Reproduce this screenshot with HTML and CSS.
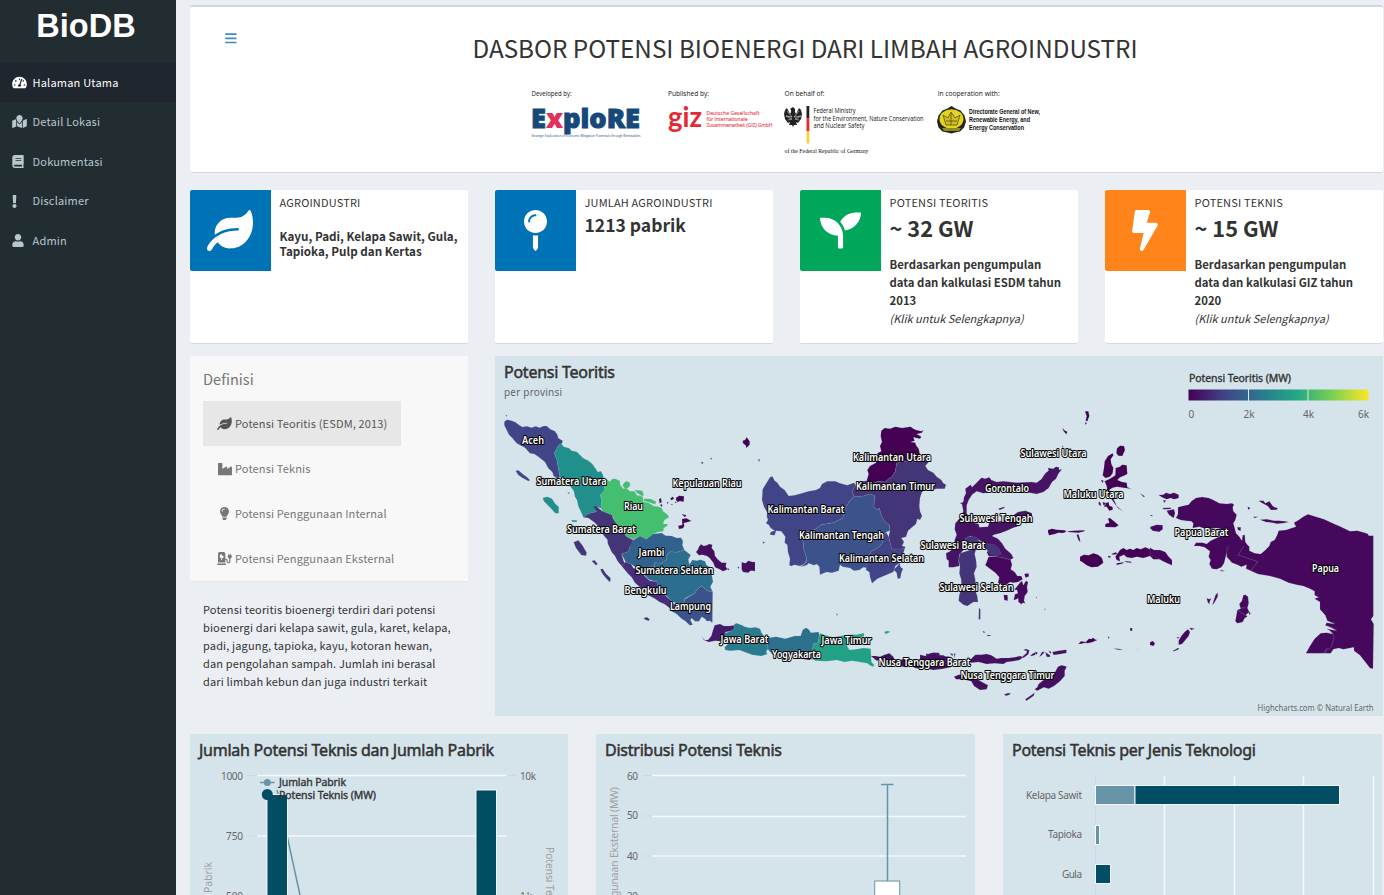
FILE: index.html
```html
<!DOCTYPE html>
<html lang="id">
<head>
<meta charset="utf-8">
<title>BioDB</title>
<link rel="stylesheet" href="styles.css">
</head>
<body>
<svg width="0" height="0" class="defs"><defs>
<symbol id="leaf" viewBox="0 0 576 512"><path d="M546.2 9.7c-5.6-12.5-21.6-13-28.3-1.2C486.9 62.4 431.4 96 368 96h-80C182 96 96 182 96 288c0 7 .8 13.7 1.5 20.5C161.3 262.8 253.4 224 384 224c8.8 0 16 7.2 16 16s-7.2 16-16 16C132.6 256 26 410.1 2.4 468c-6.6 16.3 1.2 34.9 17.5 41.6 16.4 6.8 35-1.1 41.8-17.3 1.5-3.6 20.9-47.9 71.9-90.6 32.4 43.9 94 85.8 174.9 77.2C465.5 467.5 576 326.7 576 154.3c0-50.2-10.8-102.2-29.8-144.6z"/></symbol>
</defs></svg>
<div class="app">
<aside class="sidebar">
  <div class="brand">BioDB</div>
  <nav>
    <a class="nav-item active"><svg class="ico w16" viewBox="0 0 576 512"><path d="M288 32C128.94 32 0 160.94 0 320c0 52.8 14.25 102.26 39.06 144.8 5.61 9.62 16.3 15.2 27.44 15.2h443c11.14 0 21.83-5.58 27.44-15.2C561.75 422.26 576 372.8 576 320c0-159.06-128.94-288-288-288zm0 64c14.71 0 26.58 10.13 30.32 23.65-1.11 2.26-2.64 4.23-3.45 6.67l-9.22 27.67c-5.13 3.49-10.97 6.01-17.64 6.01-17.67 0-32-14.33-32-32S270.33 96 288 96zM96 384c-17.67 0-32-14.33-32-32s14.33-32 32-32 32 14.33 32 32-14.33 32-32 32zm48-160c-17.67 0-32-14.33-32-32s14.33-32 32-32 32 14.33 32 32-14.33 32-32 32zm246.77-72.41l-61.33 184C343.13 347.33 352 364.54 352 384c0 11.72-3.38 22.55-8.88 32H232.88c-5.5-9.45-8.88-20.28-8.88-32 0-33.94 26.5-61.43 59.9-63.59l61.34-184.01c4.17-12.56 17.73-19.45 30.36-15.17 12.57 4.19 19.35 17.79 15.17 30.36zm14.66 57.2l15.52-46.55c3.47-1.29 7.13-2.23 11.05-2.23 17.67 0 32 14.33 32 32s-14.33 32-32 32c-11.38-.01-20.89-6.28-26.57-15.22zM480 384c-17.67 0-32-14.33-32-32s14.33-32 32-32 32 14.33 32 32-14.33 32-32 32z"/></svg><span>Halaman Utama</span></a>
    <a class="nav-item"><svg class="ico w16" viewBox="0 0 576 512"><path d="M288 0c-69.59 0-126 56.41-126 126 0 56.26 82.35 158.8 113.9 196.02 6.39 7.54 17.82 7.54 24.2 0C331.65 284.8 414 182.26 414 126 414 56.41 357.59 0 288 0zM20.12 215.95A32.006 32.006 0 0 0 0 245.66v250.32c0 11.32 11.43 19.06 21.94 14.86L160 448V214.92c-8.84-15.98-16.07-31.54-21.25-46.42L20.12 215.95zM288 359.67c-14.07 0-27.38-6.18-36.51-16.96-19.66-23.2-40.57-49.62-59.49-76.72v182l192 64V266c-18.92 27.09-39.82 53.52-59.49 76.72-9.13 10.77-22.44 16.95-36.51 16.95zm266.06-198.51L416 224v288l139.88-55.95A31.996 31.996 0 0 0 576 426.34V176.02c0-11.32-11.43-19.06-21.94-14.86z"/></svg><span>Detail Lokasi</span></a>
    <a class="nav-item"><svg class="ico w12" viewBox="0 0 448 512"><path d="M448 360V24c0-13.3-10.7-24-24-24H96C43 0 0 43 0 96v320c0 53 43 96 96 96h328c13.3 0 24-10.7 24-24v-16c0-7.5-3.5-14.3-8.9-18.7-4.2-15.4-4.2-59.3 0-74.7 5.4-4.3 8.9-11.1 8.9-18.6zM128 134c0-3.3 2.7-6 6-6h212c3.3 0 6 2.7 6 6v20c0 3.3-2.7 6-6 6H134c-3.3 0-6-2.7-6-6v-20zm0 64c0-3.3 2.7-6 6-6h212c3.3 0 6 2.7 6 6v20c0 3.3-2.7 6-6 6H134c-3.3 0-6-2.7-6-6v-20zm253.4 250H96c-17.7 0-32-14.3-32-32 0-17.6 14.4-32 32-32h285.4c-1.9 17.1-1.9 46.9 0 64z"/></svg><span>Dokumentasi</span></a>
    <a class="nav-item"><svg class="ico w5" viewBox="0 0 192 512"><path d="M176 432c0 44.1-35.9 80-80 80s-80-35.900-80-80 35.900-80 80-80 80 35.900 80 80zM25.300 25.200l13.600 272C39.500 310 50 320 62.800 320h66.300c12.800 0 23.400-10 24-22.800l13.600-272C167.400 11.500 156.500 0 142.800 0H49.200C35.500 0 24.600 11.500 25.300 25.200z"/></svg><span>Disclaimer</span></a>
    <a class="nav-item"><svg class="ico w12" viewBox="0 0 448 512"><path d="M224 256c70.7 0 128-57.3 128-128S294.7 0 224 0 96 57.3 96 128s57.3 128 128 128zm89.6 32h-16.700c-22.200 10.200-46.900 16-72.900 16s-50.600-5.800-72.900-16h-16.700C60.200 288 0 348.200 0 422.400V464c0 26.500 21.500 48 48 48h352c26.500 0 48-21.500 48-48v-41.600c0-74.200-60.200-134.400-134.400-134.400z"/></svg><span>Admin</span></a>
  </nav>
</aside>
<main class="content">
  <header class="hero">
    <svg class="burger" viewBox="0 0 12 11"><path d="M.3 1.200h11.200M.3 5.300h11.200M.3 9.500h11.200"/></svg>
    <h1>DASBOR POTENSI BIOENERGI DARI LIMBAH AGROINDUSTRI</h1>
    <svg class="logos" viewBox="525 85 530 75">
      <g class="cap"><text x="531.500" y="96" textLength="40" lengthAdjust="spacingAndGlyphs">Developed by:</text><text x="668" y="96" textLength="41" lengthAdjust="spacingAndGlyphs">Published by:</text><text x="784.500" y="96" textLength="40" lengthAdjust="spacingAndGlyphs">On behalf of:</text><text x="937.700" y="96" textLength="62" lengthAdjust="spacingAndGlyphs">In cooperation with:</text></g>
      <text class="explore" x="531" y="128" textLength="109" lengthAdjust="spacingAndGlyphs">E<tspan class="pink">x</tspan>ploRE</text>
      <text class="tag" x="531.500" y="137" textLength="109" lengthAdjust="spacingAndGlyphs">Strategic Exploration of Economic Mitigation Potentials through Renewables</text>
      <text class="giz" x="668" y="127" textLength="34" lengthAdjust="spacingAndGlyphs">giz</text>
      <g class="giztext"><text x="706.500" y="115.300" textLength="53">Deutsche Gesellschaft</text><text x="706.500" y="121" textLength="41">für Internationale</text><text x="706.500" y="126.500" textLength="66">Zusammenarbeit (GIZ) GmbH</text></g>
      <path class="eagle" d="M793 107l2 2v3l1 2 3-6 2 2 1 4-1 5-3 4-2-1 1 3h-3l-1 2-1-2h-3l1-3-2 1-3-4-1-5 1-4 2-2 3 6 1-2v-2l-1-1z"/><path class="feathers" d="M787 111l5 6-6-1 6 3-4 1M799 111l-5 6 7-1-6 3 4 1"/>
      <path fill="#222" d="M806.500 106h2.800v12.500h-2.800z"/><path fill="#e52832" d="M806.500 118.500h2.800v12.500h-2.800z"/><path fill="#f8d23c" d="M806.500 131h2.800v12.500h-2.800z"/>
      <g class="bmu"><text x="813.500" y="113" textLength="42" lengthAdjust="spacingAndGlyphs">Federal Ministry</text><text x="813.500" y="120.500" textLength="110" lengthAdjust="spacingAndGlyphs">for the Environment, Nature Conservation</text><text x="813.500" y="128" textLength="51" lengthAdjust="spacingAndGlyphs">and Nuclear Safety</text></g>
      <text class="fed" x="784.500" y="153" textLength="84" lengthAdjust="spacingAndGlyphs">of the Federal Republic of Germany</text>
      <path d="M951.500 106l4 2.500 5 2 4 5 1.500 6-2 6-4 4-5 1-3.500 1-4-1-5-1-4-4-1.500-6 1.500-6 4-5 5-2z" fill="#25231b"/><ellipse cx="951.500" cy="119" rx="12" ry="9.800" fill="#e1d51d"/><path d="M943 115l5 3 3-6 4 6 5-3-3 10h-11zM946 121h11M951 113v12" fill="#d2bd27" stroke="#57500d" stroke-width=".8"/><path d="M942 128h19l-2 3h-15z" fill="#8e8925"/>
      <g class="dir"><text x="969" y="114" textLength="71" lengthAdjust="spacingAndGlyphs">Directorate General of New,</text><text x="969" y="122" textLength="61" lengthAdjust="spacingAndGlyphs">Renewable Energy, and</text><text x="969" y="129.500" textLength="55" lengthAdjust="spacingAndGlyphs">Energy Conservation</text></g>
    </svg>
  </header>

  <section class="cards">
    <article class="card"><div class="tile blue"><svg class="leaf"><use href="#leaf"/></svg></div><div class="info"><div class="label">AGROINDUSTRI</div><div class="commod">Kayu, Padi, Kelapa Sawit, Gula,<br>Tapioka, Pulp dan Kertas</div></div></article>
    <article class="card"><div class="tile blue"><svg class="pin" viewBox="0 0 288 512"><path d="M112 316.940v156.690l22.020 33.020c4.750 7.120 15.220 7.120 19.970 0L176 473.630V316.940c-10.390 1.920-21.060 3.060-32 3.060s-21.610-1.140-32-3.060zM144 0C64.470 0 0 64.470 0 144s64.470 144 144 144 144-64.470 144-144S223.530 0 144 0zm0 76c-37.500 0-68 30.500-68 68 0 6.620-5.380 12-12 12s-12-5.380-12-12c0-50.730 41.280-92 92-92 6.620 0 12 5.380 12 12s-5.380 12-12 12z"/></svg></div><div class="info"><div class="label">JUMLAH AGROINDUSTRI</div><div class="count">1213 pabrik</div></div></article>
    <article class="card"><div class="tile green"><svg class="seed" viewBox="0 0 512 512"><path d="M64 96H0c0 123.700 100.300 224 224 224v144c0 8.800 7.200 16 16 16h32c8.800 0 16-7.200 16-16V320C288 196.300 187.700 96 64 96zm384-64c-84.200 0-157.400 46.500-195.700 115.200 27.700 30.200 48.200 66.900 59 107.600C424 243.100 512 147.900 512 32h-64z"/></svg></div><div class="info"><div class="label">POTENSI TEORITIS</div><div class="gw">~ 32 GW</div><div class="basis">Berdasarkan pengumpulan<br>data dan kalkulasi ESDM tahun<br>2013</div><div class="more">(Klik untuk Selengkapnya)</div></div></article>
    <article class="card"><div class="tile orange"><svg class="bolt" viewBox="0 0 320 512"><path d="M296 160H180.600l42.600-129.800C227.200 15 215.700 0 200 0H56C44 0 33.800 8.900 32.200 20.800l-32 240C-1.700 275.200 9.500 288 24 288h118.700L96.600 482.500c-3.600 15.200 8 29.500 23.300 29.500 8.400 0 16.400-4.400 20.800-12l176-304c9.300-15.900-2.200-36-20.700-36z"/></svg></div><div class="info"><div class="label">POTENSI TEKNIS</div><div class="gw">~ 15 GW</div><div class="basis">Berdasarkan pengumpulan<br>data dan kalkulasi GIZ tahun<br>2020</div><div class="more">(Klik untuk Selengkapnya)</div></div></article>
  </section>

  <section class="middle">
    <div class="left">
      <div class="defs-box">
        <div class="defs-title">Definisi</div>
        <a class="tab on"><i><svg class="t-leaf"><use href="#leaf"/></svg></i><span>Potensi Teoritis (ESDM, 2013)</span></a>
        <a class="tab"><i><svg width="14" height="14" viewBox="0 0 512 512"><path d="M475.115 163.781L336 252.309v-68.280c0-18.916-20.931-30.399-36.885-20.248L160 252.309V56c0-13.255-10.745-24-24-24H24C10.745 32 0 42.745 0 56v400c0 13.255 10.745 24 24 24h464c13.255 0 24-10.745 24-24V184.029c0-18.917-20.931-30.399-36.885-20.248z"/></svg></i><span>Potensi Teknis</span></a>
        <a class="tab"><i><svg width="9" height="13" viewBox="0 0 352 512"><path d="M96.060 454.350c.01 6.290 1.870 12.450 5.360 17.690l17.090 25.690a31.990 31.990 0 0 0 26.640 14.280h61.710a31.990 31.990 0 0 0 26.640-14.280l17.090-25.690a31.989 31.989 0 0 0 5.360-17.690l.04-38.350H96.010l.05 38.350zM0 176c0 44.370 16.450 84.850 43.560 115.780 16.520 18.850 42.360 58.230 52.210 91.450.04.26.07.52.11.78h160.240c.04-.26.07-.51.11-.78 9.850-33.220 35.690-72.600 52.210-91.450C335.550 260.850 352 220.370 352 176 352 78.610 272.910-.3 175.450 0 73.440.31 0 82.970 0 176zm176-80c-44.110 0-80 35.890-80 80 0 8.840-7.160 16-16 16s-16-7.160-16-16c0-61.760 50.240-112 112-112 8.840 0 16 7.160 16 16s-7.160 16-16 16z"/></svg></i><span>Potensi Penggunaan Internal</span></a>
        <a class="tab"><i><svg width="15" height="13" viewBox="0 0 576 512"><path d="M336 448H16c-8.840 0-16 7.160-16 16v32c0 8.840 7.160 16 16 16h320c8.840 0 16-7.160 16-16v-32c0-8.840-7.160-16-16-16zm208-320V80c0-8.840-7.160-16-16-16s-16 7.160-16 16v48h-32V80c0-8.840-7.160-16-16-16s-16 7.160-16 16v48h-16c-8.840 0-16 7.160-16 16v32c0 35.760 23.620 65.690 56 75.930v118.490c0 13.950-9.500 26.920-23.260 29.190C431.220 402.500 416 388.990 416 372v-28c0-48.600-39.400-88-88-88h-8V64c0-35.350-28.650-64-64-64H96C60.650 0 32 28.650 32 64v352h288V304h8c22.090 0 40 17.910 40 40v24.610c0 39.670 28.920 75.160 68.410 79.010C481.710 452.050 520 416.410 520 372V251.930c32.380-10.240 56-40.170 56-75.930v-32c0-8.840-7.160-16-16-16h-16zm-283.910 47.760l-93.700 139c-2.200 3.330-6.210 5.240-10.390 5.240-7.670 0-13.470-6.280-11.670-12.920L167.350 224H108c-7.250 0-12.850-5.590-11.890-11.890l16-107C112.900 99.900 117.980 96 124 96h68c7.880 0 13.620 6.540 11.600 13.210L192 160h57.700c9.240 0 15.010 8.780 10.390 15.760z"/></svg></i><span>Potensi Penggunaan Eksternal</span></a>
      </div>
      <p class="desc">Potensi teoritis bioenergi terdiri dari potensi<br>bioenergi dari kelapa sawit, gula, karet, kelapa,<br>padi, jagung, tapioka, kayu, kotoran hewan,<br>dan pengolahan sampah. Jumlah ini berasal<br>dari limbah kebun dan juga industri terkait</p>
    </div>
    <div class="map">
    <svg width="888" height="360" viewBox="495 356 888 360">
      <defs><linearGradient id="vir"><stop offset="0" stop-color="#440154"/><stop offset=".2" stop-color="#414487"/><stop offset=".4" stop-color="#2a788e"/><stop offset=".6" stop-color="#22a884"/><stop offset=".8" stop-color="#7ad151"/><stop offset="1" stop-color="#fde725"/></linearGradient></defs>
      <text class="title" x="504" y="378" textLength="111">Potensi Teoritis</text>
      <text class="sub" x="504" y="396" textLength="58">per provinsi</text>
      <g class="land" transform="translate(495 400) scale(.33333)">
        <path fill="#414487" d="M28 65L36 59 50 62 60 66 72 75 82 81 96 79 110 83 122 79 134 83 146 78 155 78 166 88 180 94 187 104 190 115 203 122 201 130 192 135 184 148 178 160 186 180 190 205 195 230 188 236 176 228 172 216 160 205 150 186 130 170 118 162 105 160 90 143 65 130 52 114 42 104 32 84 28 76zM32 44l4 2-2 4zM62 213l8-2 14 12 14 10 7 8-5 2-18-10-12-8z"/>
        <path fill="#21908c" d="M192 135L198 130 206 140 222 145 230 152 245 155 265 175 280 182 292 192 303 208 308 216 318 214 325 228 325 250 330 270 316 285 320 300 318 325 305 320 302 328 305 335 285 340 278 346 265 352 260 340 250 318 246 300 240 290 236 272 228 262 220 250 210 250 195 230 190 205 186 180 178 160 184 148zM143 294l14-4 14 6 10 16 10 8 0 20-10 0-14-16-10-10-10-10zM218 277l8 2-6 2zM229 361l16 0 1 4-13 1z"/>
        <path fill="#44bf70" d="M325 232L345 245 350 238 360 236 374 242 376 256 384 266 394 264 404 274 418 274 426 286 438 294 446 306 460 308 474 318 490 320 500 324 504 334 518 344 522 352 508 360 504 372 518 372 516 378 506 384 505 394 488 396 475 402 465 414 455 418 435 408 415 418 395 410 375 385 358 362 356 352 325 338 318 325 320 300 316 285 330 270 325 250zM387 249l7-5 9 3 3 9-8 9-11-2-4-7zM420 270l22 2 4 14-5 2-17-11zM447 296l20 1 17 8-4 8-20-7-13-3zM430 286l13 4 2 12-12-6zM452 310l22 5-3 6-21-3z"/>
        <path fill="#443579" d="M265 352L285 340 305 335 295 320 302 317 322 334 350 345 358 362 375 385 395 410 415 420 412 434 405 440 400 455 380 462 386 484 390 490 380 498 368 484 360 468 350 456 338 430 338 420 325 405 322 394 308 378 300 368 280 354zM236 427l14-6 12 15 13 22-2 9-14-2-16-21zM290 483l9-2 9 11-5 4zM316 508l7-2 10 15 14 14-2 12-13-14-11-14z"/>
        <path fill="#31618d" d="M415 420L435 408 455 418 475 402 500 399 512 407 530 408 545 414 558 413 564 424 562 435 568 450 545 457 525 455 515 466 516 478 500 490 478 488 478 500 450 503 430 508 420 500 408 492 392 486 380 462 400 455 405 440z"/>
        <path fill="#2c6e8e" d="M568 450L587 465 580 478 583 494 592 480 606 482 616 479 630 484 634 495 658 510 650 524 654 545 646 560 653 576 636 572 620 557 605 570 600 580 570 595 565 612 545 610 530 604 515 588 490 562 485 545 464 540 430 508 450 503 478 500 478 488 500 490 516 478 515 466 525 455 545 457z"/>
        <path fill="#472d7b" d="M380 498L392 486 408 492 415 504 430 510 445 524 464 542 485 545 490 562 515 590 530 604 540 618 524 624 508 612 494 606 480 596 460 586 440 566 420 548 410 532 398 520zM446 654l10-2 8 6-3 4-10-3z"/>
        <path fill="#3b528b" d="M570 597L600 580 605 570 620 557 636 572 653 576 652 668 644 662 636 664 630 656 620 650 612 664 600 664 590 654 586 660 593 674 584 676 572 664 560 656 545 642 530 634 524 624 540 612 565 612z"/>
        <path fill="#440f5f" d="M603 456L608 450 612 440 618 433 626 438 636 436 642 432 652 434 650 444 658 454 660 468 668 478 680 488 694 488 692 500 698 508 684 514 674 508 660 502 655 488 644 474 636 468 622 464 612 466zM740 487L752 490 760 482 772 486 780 486 780 514 774 512 766 512 760 518 744 516 740 508zM728 500l5 2-3 4zM698 504l5 4-4 3z"/>
        <path fill="#440154" d="M743 122L750 120 755 112 764 124 764 134 754 144 752 136 744 130zM619 185l6 3-4 5zM647 173l4 2-3 4zM492 298l6-4 2 13-6 3zM497 313l5 1-1 7-5-5zM526 295l8-5 3 6-8 5zM543 293l10-6 14 2-1 16-12-2-5 4-6-7zM516 306l5 2-5 3zM528 314l3-3 2 4zM540 304l5 3-3 3zM560 342l14 4-4 6zM561 357l13-2 15 8-13 4-10 2 2 8-4 8-12 2-2-10 12-2z"/>
      </g>
      <g class="land" transform="translate(740 410) scale(.33333)">
        <path fill="#414487" d="M90 202L97 199 104 212 112 218 120 230 134 240 146 258 164 256 186 250 206 244 228 240 240 234 246 222 262 214 286 214 300 220 322 226 342 218 348 228 336 244 342 260 330 272 318 290 308 325 280 338 244 344 226 358 180 372 190 398 192 420 200 445 196 460 180 468 164 464 154 468 148 466 150 446 144 426 142 404 134 398 136 380 124 364 108 362 104 376 90 374 92 366 104 362 92 354 86 344 78 340 84 330 80 318 82 308 72 290 66 270 68 238zM68 395l7 1-5 5z"/>
        <path fill="#3b528b" d="M342 260L370 258 386 252 404 256 402 290 410 300 418 294 424 316 434 334 448 346 450 362 438 366 432 384 426 402 410 416 394 424 386 438 382 474 370 472 358 480 342 482 330 474 308 470 300 464 296 482 276 488 260 486 250 490 240 494 238 470 230 462 222 466 206 460 200 466 182 470 198 458 200 444 192 420 190 398 180 372 226 358 244 344 280 338 308 325 318 290 330 272z"/>
        <path fill="#440154" d="M424 62L434 54 450 56 466 50 486 54 512 50 520 56 528 60 544 64 550 60 546 68 530 72 544 80 540 86 520 82 524 92 512 96 526 98 528 106 536 116 540 134 550 146 540 154 510 156 486 154 470 160 466 184 456 200 446 206 436 216 414 214 396 222 380 212 386 192 382 180 390 168 408 158 416 144 412 130 424 124 420 108 426 96 422 78z"/>
        <path fill="#443579" d="M470 160L486 154 510 156 540 154 560 148 566 156 556 168 564 180 580 188 590 200 604 210 610 220 618 224 614 236 590 236 576 240 556 238 546 246 540 264 538 288 540 304 546 318 540 330 532 326 528 342 516 352 504 362 498 380 484 384 492 396 486 408 496 410 494 416 456 420 450 398 446 380 450 362 448 346 434 334 424 316 418 294 410 300 402 290 404 256 386 252 370 258 342 260 336 244 348 228 350 216 380 212 396 222 414 214 436 216 446 206 456 200 466 184z"/>
        <path fill="#414487" d="M438 366L446 380 450 398 456 418 494 416 490 430 492 444 480 458 466 468 460 486 440 494 412 506 396 520 390 500 388 486 378 480 386 438 394 424 410 416 426 402 432 384zM473 467l6-8 2 12 8 5-5 12-3 17-8 1-3-18-9-9z"/>
        <path fill="#440f5f" d="M54 149l5-1-1 7z"/>
      </g>
      <g class="land" transform="translate(690 590) scale(.33333)">
        <path fill="#46196a" d="M36 141L44 150 54 150 64 138 68 124 74 106 90 102 102 108 118 108 134 106 132 118 122 124 106 126 104 144 92 154 76 152 56 156 42 150z"/>
        <path fill="#297b8e" d="M133 103L140 100 156 106 164 110 180 114 196 112 210 116 214 128 222 138 222 148 232 154 234 176 228 186 232 192 214 198 186 194 164 186 148 180 120 182 106 180 104 172 116 160 106 146 104 130 122 124 132 118z"/>
        <path fill="#2d708e" d="M233 144L258 140 286 146 314 138 332 138 338 120 348 113 358 120 362 128 386 126 388 138 384 158 370 162 366 186 368 208 340 206 318 200 290 194 272 194 250 196 234 178 232 154z"/><path fill="#440f5f" d="M330 202l14-6 20 5-4 9-18-2z"/>
        <path fill="#22a187" d="M388 138L390 130 406 136 430 142 452 138 476 134 500 134 522 130 522 138 500 146 484 152 470 166 478 180 500 178 520 174 542 176 544 216 552 224 550 230 540 226 532 220 510 216 486 212 464 216 440 210 410 214 378 212 368 208 366 186 370 162 384 158zM438 71l6 1-3 5zM583 126l8-3 10 2-6 3-8 4z"/>
        <path fill="#440f5f" d="M543 198L556 198 570 200 584 194 598 190 610 200 616 214 640 208 660 206 674 216 688 208 704 210 712 200 728 188 746 188 752 198 780 200 780 224 754 228 730 222 712 222 690 236 676 234 664 228 646 232 620 226 600 220 576 208 560 212zM708 191l11 1-1 7-9-2z"/>
      </g>
      <g class="land" transform="translate(920 400) scale(.33333)">
        <path fill="#471365" d="M178 240L184 233 196 236 208 232 214 240 230 246 250 244 290 248 334 246 350 248 364 238 376 220 386 212 384 204 400 206 408 200 416 202 418 210 426 208 416 220 408 236 396 246 386 264 370 276 350 282 330 278 290 276 240 272 190 280 170 274 156 284 146 300 140 316 140 340 150 356 160 368 176 372 178 382 204 380 208 368 230 366 248 362 262 350 280 346 294 336 316 332 336 340 336 366 318 370 304 366 296 378 278 384 260 392 240 400 222 404 216 408 234 416 246 430 256 446 274 462 280 474 270 480 244 472 206 468 200 456 212 446 200 432 172 418 152 408 136 416 138 440 128 452 118 464 116 484 118 498 100 502 86 502 86 482 80 478 78 460 90 454 104 440 104 420 110 404 104 388 106 370 118 356 130 334 126 312 120 310 130 306 132 292 138 280 136 266 152 254 156 262zM235 326l18-6 0 4-14 6z"/>
        <path fill="#46085c" d="M206 470L226 470 244 472 272 480 276 494 272 508 284 516 292 528 304 528 308 538 294 546 280 548 270 546 262 552 248 552 234 548 238 532 226 518 212 508 196 496zM313 522l12-2 2 9-10 4zM301 547l5-4 4 13 8-14 6 5-3 14 2 15-9 12-2 15 4 7-8-2-4 5-9-8 0-10-14 6 4-18 9-3-3-10-8-1zM251 584l12 2 0 16-10-2z"/>
        <path fill="#443579" d="M120 460L132 456 150 450 168 448 164 462 168 480 170 500 162 520 166 540 166 570 172 590 174 606 160 606 142 618 130 614 116 602 118 584 124 566 124 540 118 520 120 500 116 480zM136 414L156 408 170 412 176 422 200 432 224 434 236 446 244 462 224 468 208 460 200 448 180 446 168 450 150 442 138 436zM177 624l4 4 0 30-5 0zM188 692l8 5-5 2zM200 705l12 0-1 3-8 0z"/>
        <path fill="#440154" d="M495 34l10 0 3 14-6 16-5-2 3-14zM496 66l5 4-5 4zM427 84l8 8 7 3-3 8-8-9zM427 136l3 5-2 3zM591 145l9-8 12 1 3 12-8 18-12-1-6-8zM578 160L580 166 572 178 574 192 580 204 578 220 570 230 556 234 548 226 552 204 554 184 564 168zM587 204L600 200 606 194 620 196 622 222 610 228 600 232 592 240 606 246 620 248 622 262 634 266 616 264 590 260 576 264 568 270 572 284 582 300 590 318 608 334 594 324 582 308 570 290 562 272 560 258 554 244 570 236 586 226zM543 240l8 2-4 7zM536 305l6 4 0 10-6-6zM548 306l8 3 0 7-6-1zM552 320l8 0 8 12 10-3 0-8-10-4-2-10-10 2zM556 372l12-4-4-12 6-2 12 10 14 12-10 6-30-1zM384 390l12-4 14 3 25 2 4 4-10 4-14-1-10 4-18 4-3-10zM443 394l18-2 32-1 0 3-18 4-30-2zM470 404l5-1 4 12 2 12-6-8zM480 470L492 464 506 466 520 460 534 464 546 474 550 488 534 500 514 502 500 496 490 488 480 482zM600 450L610 444 620 450 630 446 640 450 650 444 662 448 676 442 690 448 700 450 720 452 720 478 700 478 690 468 670 474 650 470 636 474 620 472 612 464 598 470 600 484 590 480 586 470zM564 467l10 3-8 4zM574 462l14-5 4 5-12 2zM590 490l20-3 0 3-20 5zM612 483l22 2 0 3-14-1zM660 280l14 9-2 3zM690 385l18-8 12-1 0 18-18-1zM690 346l8 1-2 2z"/>
        <path fill="#440f5f" d="M0 764L16 768 30 760 44 758 56 766 70 766 84 776 84 784 40 786 0 780zM90 760l9 2-2 6zM102 760l4 1-2 14zM0 784L40 784 80 790 96 800 70 806 40 810 14 804 0 806zM150 780L166 764 184 764 200 762 214 766 230 776 244 774 266 774 284 772 300 768 310 772 298 780 278 784 260 786 250 792 224 790 200 792 176 786 152 788zM310 750l8-3 10 4-3 12-14 10-4-3 12-10 2-7zM330 768l8-7 8-4 0 7-8 3zM346 755l8 3-6 6zM358 770l8-14 8-1-8 10zM376 757l14 9 0 5-10-1zM386 752l8 4-3 5zM397 756l20-4 22-3 0 10-18 3-20 3zM102 830L116 824 150 824 170 836 186 846 204 856 200 868 180 870 162 858 154 844 130 838 108 838zM252 884l10-4 10 0-4 4-10 3zM316 898l10-7 14-10 4-4-3 10-14 10-8 5zM344 868L352 862 356 852 368 842 384 832 402 822 414 800 424 796 434 798 440 800 434 812 434 828 420 844 402 858 386 866 372 862 360 868 352 872z"/>
        <path fill="#440154" d="M475 732l8-8 14 2 10-10 8 1 4-4 8 6 5 1-14 6-14 4-8-2-12 3zM563 710l5 1-1 6zM630 684l7 1-1 8-5-1zM581 746l14 0 14 4-12-1zM650 747l6 1zM691 727l8-3 6 7-9 5zM348 590l3 2-3 2zM373 626l4 2-3 1z"/>
      </g>
      <g class="land" transform="translate(1150 360) scale(.33333)">
        <path fill="#46085c" d="M84 442L98 438 116 434 124 424 138 414 156 411 176 414 190 420 208 430 230 432 246 430 252 434 248 442 250 454 260 464 256 480 250 490 254 504 258 520 268 530 276 542 278 526 284 524 286 546 292 554 298 560 298 572 314 580 332 582 344 572 358 558 362 546 374 540 382 524 386 512 408 510 426 504 438 500 432 488 446 480 460 470 474 463 490 468 522 478 548 490 572 500 600 514 622 512 644 518 654 522 656 527 670 527 670 768 663 778 671 792 669 926 660 924 630 886 612 872 612 862 580 868 566 864 550 868 542 880 468 880 480 858 494 836 512 820 530 818 548 822 540 812 530 806 560 812 545 804 526 796 530 788 554 792 532 782 526 766 510 748 510 726 494 716 506 712 494 706 494 694 480 686 460 678 440 674 416 668 390 656 360 648 324 642 302 632 288 626 290 614 274 620 262 614 246 608 230 590 230 564 236 558 230 578 226 594 222 610 214 622 200 628 186 626 178 612 182 600 176 590 180 574 164 562 148 558 132 558 138 548 158 548 170 552 182 542 200 534 212 528 218 508 200 504 170 508 148 500 128 504 130 490 124 484 108 482 92 480 78 474 84 462zM37 444l26-1-1 4-20 1zM50 452l22-4 3 12-4 14-14-10zM26 405l14-1 8-6 12 4 12-4 14 6 0 10-14 4-10-4-12 4-14-6zM40 420l8 2-6 6zM293 440l8 4-6 5zM326 422l14 0 6 8 12-6 10 14 6 4 9 2-2 5-18 1-10-12-18-10zM310 470l14 0-10 4zM330 479l20-1 22 4 16 0 16 2 12 2-14 3-20 2-14-3-20-2zM262 502l10 0 0 10-8-2zM0 501l20-7 18 2 0 12-10 7-20-3zM0 563L12 570 30 570 46 576 56 590 66 600 66 616 52 610 36 602 20 592 0 586zM170 715l8 3 6-3-6 12 1 6-5-5zM203 698l0 12-10 18-6 8 4-14 6-18zM280 706L286 704 294 710 296 730 292 744 298 756 288 764 292 770 284 774 278 786 262 790 256 784 260 762 262 750 272 746 268 732 276 722zM296 755l6 4-4 6zM68 873l16-9 4 3-16 7zM86 842L94 828 104 816 114 808 120 816 116 828 106 840 96 852 86 854zM78 822l10 1zM80 832l8 0-4 4zM118 803l16 3-10 4zM0 847l8-3 6 6-3 8-11-3zM0 466l8 0-4 2zM211 630l14 3-12 1z"/>
        <path class="border" d="M282 558l-18 27 60 20-22 28-12-8M526 785l28 4M533 797l24 12M532 818l14 -2 6 14-4 20-6 14M520 880l10-14 12 2M530 868l-4 12M262 750l30 20M264 745l22-2"/>
      </g>
      <g class="names"><text x="522" y="444" textLength="22" lengthAdjust="spacingAndGlyphs">Aceh</text><text x="536.500" y="485" textLength="70" lengthAdjust="spacingAndGlyphs">Sumatera Utara</text><text x="624" y="510" textLength="19" lengthAdjust="spacingAndGlyphs">Riau</text><text x="672.500" y="487" textLength="69" lengthAdjust="spacingAndGlyphs">Kepulauan Riau</text><text x="567" y="533" textLength="69" lengthAdjust="spacingAndGlyphs">Sumatera Barat</text><text x="638.500" y="556" textLength="26" lengthAdjust="spacingAndGlyphs">Jambi</text><text x="635.500" y="574" textLength="78" lengthAdjust="spacingAndGlyphs">Sumatera Selatan</text><text x="624.500" y="594" textLength="42" lengthAdjust="spacingAndGlyphs">Bengkulu</text><text x="670" y="610" textLength="41" lengthAdjust="spacingAndGlyphs">Lampung</text><text x="720.500" y="643" textLength="48" lengthAdjust="spacingAndGlyphs">Jawa Barat</text><text x="772" y="658" textLength="49" lengthAdjust="spacingAndGlyphs">Yogyakarta</text><text x="821.500" y="644" textLength="50" lengthAdjust="spacingAndGlyphs">Jawa Timur</text><text x="878.500" y="666" textLength="92" lengthAdjust="spacingAndGlyphs">Nusa Tenggara Barat</text><text x="960.500" y="679" textLength="94" lengthAdjust="spacingAndGlyphs">Nusa Tenggara Timur</text><text x="853" y="461" textLength="78" lengthAdjust="spacingAndGlyphs">Kalimantan Utara</text><text x="856" y="490" textLength="79" lengthAdjust="spacingAndGlyphs">Kalimantan Timur</text><text x="767.500" y="513" textLength="77" lengthAdjust="spacingAndGlyphs">Kalimantan Barat</text><text x="799" y="539" textLength="85" lengthAdjust="spacingAndGlyphs">Kalimantan Tengah</text><text x="839" y="562" textLength="85" lengthAdjust="spacingAndGlyphs">Kalimantan Selatan</text><text x="920.500" y="549" textLength="65" lengthAdjust="spacingAndGlyphs">Sulawesi Barat</text><text x="939.500" y="591" textLength="74" lengthAdjust="spacingAndGlyphs">Sulawesi Selatan</text><text x="959.500" y="522" textLength="73" lengthAdjust="spacingAndGlyphs">Sulawesi Tengah</text><text x="985" y="492" textLength="44" lengthAdjust="spacingAndGlyphs">Gorontalo</text><text x="1020.500" y="457" textLength="66" lengthAdjust="spacingAndGlyphs">Sulawesi Utara</text><text x="1063.500" y="498" textLength="60" lengthAdjust="spacingAndGlyphs">Maluku Utara</text><text x="1147" y="603" textLength="33" lengthAdjust="spacingAndGlyphs">Maluku</text><text x="1174.500" y="536" textLength="54" lengthAdjust="spacingAndGlyphs">Papua Barat</text><text x="1312" y="572" textLength="27" lengthAdjust="spacingAndGlyphs">Papua</text></g>
      <text class="legend" x="1189" y="382" textLength="102">Potensi Teoritis (MW)</text>
      <rect x="1188.500" y="389.500" width="180" height="11" fill="url(#vir)"/><path class="ticks" d="M1248.500 389v12M1308 389v12"/>
      <g class="axis"><text x="1188.500" y="418">0</text><text x="1243.500" y="418">2k</text><text x="1303" y="418">4k</text><text x="1358" y="418">6k</text></g>
      <text class="credit" x="1257.500" y="711" textLength="116" lengthAdjust="spacingAndGlyphs">Highcharts.com © Natural Earth</text>
    </svg></div>
  </section>

  <section class="charts">
    <svg class="chart" width="378" height="360" viewBox="190 734 378 360">
      <text class="title" x="199" y="756" textLength="295">Jumlah Potensi Teknis dan Jumlah Pabrik</text>
      <path class="stub" d="M247 775.500h10M247 836h10M507 775.500h9"/><path class="grid" d="M257 775.500h250M257 836h250"/>
      <g class="axis"><text x="221" y="780" textLength="22">1000</text><text x="226" y="840" textLength="17">750</text><text x="226" y="900" textLength="17">500</text><text x="520" y="780" textLength="16">10k</text><text x="520" y="900" textLength="12">1k</text></g>
      <text class="vert" transform="translate(212 893) rotate(-90)" textLength="31">Pabrik</text>
      <text class="vert" transform="translate(546 847) rotate(90)" textLength="68" lengthAdjust="spacingAndGlyphs">Potensi Teknis</text>
      <path class="line" d="M277 790L300 895"/><g class="bar"><rect x="267" y="794.500" width="20.500" height="120"/><rect x="476" y="790" width="20.500" height="120"/></g>
      <path class="line" d="M260 782.500h14.500"/><circle cx="267.300" cy="782.500" r="3.500" fill="#6794a7"/><circle cx="267.300" cy="794.500" r="5.500" fill="#014d64"/>
      <g class="legend"><text x="279" y="786" textLength="67">Jumlah Pabrik</text><text x="279" y="799" textLength="97">Potensi Teknis (MW)</text></g>
    </svg>
    <svg class="chart" width="379" height="360" viewBox="596 734 379 360">
      <text class="title" x="605" y="756" textLength="177">Distribusi Potensi Teknis</text>
      <path class="stub" d="M643 775.500h9M643 816h9M643 856h9"/><path class="grid" d="M652 775.500h314M652 816.500h314M652 856h314"/>
      <g class="axis"><text x="627" y="780" textLength="11">60</text><text x="627" y="819" textLength="11">50</text><text x="627" y="860" textLength="11">40</text><text x="627" y="900" textLength="11">30</text></g>
      <text class="vert" transform="translate(618 959) rotate(-90)" textLength="172">Potensi Penggunaan Eksternal (MW)</text>
      <path class="line" d="M887.500 784v97"/><path class="line" d="M881 784.500h12.500"/><rect x="874.700" y="881" width="25" height="40" fill="#fff" stroke="#6794a7"/>
    </svg>
    <svg class="chart" width="379" height="360" viewBox="1003 734 379 360">
      <text class="title" x="1012" y="756" textLength="244">Potensi Teknis per Jenis Teknologi</text>
      <path class="grid" d="M1164.500 776v130M1234.500 776v130M1303.500 776v130M1373.500 776v130"/><path d="M1095.500 776v130" stroke="#c9dcee"/>
      <g class="axis"><text x="1026" y="799" textLength="56">Kelapa Sawit</text><text x="1048" y="838" textLength="34">Tapioka</text><text x="1062" y="878" textLength="20">Gula</text></g>
      <g class="bar"><rect class="soft" x="1095.500" y="785.500" width="39.500" height="19"/><rect x="1135" y="785.500" width="204.500" height="19"/><rect class="soft" x="1095.500" y="825.500" width="4" height="19"/><rect x="1095.500" y="864.500" width="15" height="19"/></g>
    </svg>
  </section>
</main>
</div>
</body>
</html>
```
FILE: styles.css
```css
* { box-sizing: border-box; }
body { margin: 0; width: 1384px; height: 895px; overflow: hidden; background: #ebeef3; color: #333; font: 12px/18px "Noto Sans CJK SC", "Noto Sans", sans-serif; }
.defs { position: absolute; }
svg { display: block; flex: none; }
.app { display: flex; height: 895px; overflow: hidden; }
.sidebar { width: 176px; flex: none; background: #222d32; }
.brand { height: 63px; padding: 6px 4px 0 0; text-align: center; color: #fff; font: bold 32.500px/40px "Liberation Sans", Arial, sans-serif; }
.nav-item { display: flex; align-items: center; height: 39.700px; padding-left: 12px; color: #b8c7ce; font-size: 11px; letter-spacing: .2px; }
.nav-item svg { fill: #b8c7ce; margin-right: auto; height: 13px; }
.nav-item span { width: 143.500px; padding-bottom: 1.500px; }
.nav-item.active { height: 39px; background: #1f262d; color: #fff; }
.nav-item.active svg { fill: #fff; }
.w16 { width: 15px; } .w12 { width: 12px; } .w5 { width: 5px; }
.content { flex: 1; padding: 5px 0 0 14px; }
.hero { display: flex; flex-direction: column; position: relative; width: 1193px; height: 168px; background: #fff; border-top: 2px solid #d2d6de; border-bottom: 1px solid #d5d9dd; border-radius: 3px; }
.burger { position: absolute; left: 35px; top: 26px; width: 12px; height: 11px; stroke: #3c8dbc; stroke-width: 1.700; }
h1 { margin: 22px 0 0 282.500px; width: 680px; height: 38px; font-size: 24.250px; line-height: 37px; font-weight: 400; white-space: nowrap; }
.logos { width: 530px; height: 75px; margin: 18px 0 0 335px; font-family: "Open Sans", sans-serif; }
.cap { font-size: 7px; fill: #111; }
.explore { font: 900 27px "Open Sans", sans-serif; fill: #15497a; stroke: #15497a; }
.explore .pink { fill: #e0315c; stroke: #e0315c; stroke-width: .2; }
.tag { font-size: 3.800px; fill: #15497a; }
.giz { font: bold 29px Lato, sans-serif; fill: #e52832; }
.giztext { font-size: 5px; fill: #e9535a; stroke: #e9535a; stroke-width: .15; }
.eagle { fill: #222; } .feathers { fill: none; stroke: #fff; stroke-width: .5; }
.bmu { font-size: 6.800px; fill: #111; }
.fed { font: 6.300px "Liberation Serif", serif; fill: #111; }
.dir { font: bold 6.400px "Liberation Sans", sans-serif; fill: #111; }
.cards { display: grid; grid-template-columns: repeat(4, 278px); gap: 27px; margin-top: 17px; }
.card { display: flex; height: 154px; background: #fff; border-radius: 2px; border-bottom: 1px solid #d5d9dd; }
.tile { width: 81px; height: 81px; display: grid; place-items: center; border-radius: 2px 0 0 2px; }
.tile svg { fill: #fff; height: 41px; margin-right: 1px; }
.blue { background: #0073b7; } .green { background: #00a65a; } .orange { background: #ff851b; }
.tile .leaf { width: 46px; } .tile .pin { width: 23px; } .tile .seed { width: 41px; } .tile .bolt { width: 26px; }
.info { padding: 3px 0 0 8.500px; white-space: nowrap; }
.label { font-size: 11px; line-height: 18px; letter-spacing: .17px; }
.commod { margin-top: 17px; font-size: 11.650px; line-height: 15px; font-weight: 700; }
.count { font-size: 17.500px; line-height: 27px; font-weight: 700; }
.gw { font-size: 21.800px; line-height: 34px; font-weight: 700; }
.basis { margin-top: 10px; font-size: 11.350px; line-height: 18px; font-weight: 700; }
.more { font-style: italic; font-size: 11px; }
.middle { display: flex; gap: 27px; margin-top: 12px; }
.left { width: 278px; }
.defs-box { height: 226px; padding: 14px 13px 0; background: #f8f8f8; border-bottom: 1px solid #e7e7e7; color: #777; }
.defs-title { font-size: 14.600px; line-height: 18px; margin-bottom: 13px; }
.tab { display: flex; align-items: center; width: max-content; height: 45px; padding: 0 14px; font-size: 11px; letter-spacing: .15px; white-space: nowrap; }
.tab span { padding-bottom: 1px; }
.tab i { width: 15px; margin-right: 3px; display: grid; place-items: center; }
.tab svg { fill: #777; }
.tab .t-leaf { width: 15px; height: 13px; fill: #555; }
.tab.on { background: #e7e7e7; color: #555; }
.desc { margin: 18px 0 0 13px; font-size: 11px; letter-spacing: .15px; line-height: 18px; white-space: nowrap; }
.map { width: 888px; height: 360px; background: #d5e4eb; }
.map svg, .chart { font-family: "Noto Sans", sans-serif; }
.title { font-size: 16px; fill: #333; stroke: #333; stroke-width: .5; }
.sub { font-size: 10px; fill: #666; }
.land path { stroke: #9aa7c3; stroke-opacity: .45; stroke-width: 1; stroke-linejoin: round; }
.land .border { fill: none; stroke: #bbc; stroke-opacity: .8; }
.names { font-size: 10.500px; font-weight: 600; fill: #fff; stroke: #000; stroke-width: 2.200px; stroke-linejoin: round; paint-order: stroke; }
.legend { font-size: 10.500px; fill: #333; stroke: #333; stroke-width: .35; }
.ticks { stroke: #e6e6e6; }
.axis { font-size: 10px; fill: #666; }
.credit { font-size: 8.800px; fill: #666; }
.charts { display: flex; gap: 28px; margin-top: 18px; }
.chart { background: #d5e4eb; }
.grid { stroke: #f4f8fa; stroke-width: 1.500; fill: none; }
.stub { stroke: #cfd8de; }
.vert { font-size: 10.500px; fill: #a0a0a3; }
.line { stroke: #6794a7; stroke-width: 1.500; }
.bar rect { fill: #014d64; stroke: #fff; stroke-width: .9; }
.bar .soft { fill: #6794a7; }
```
